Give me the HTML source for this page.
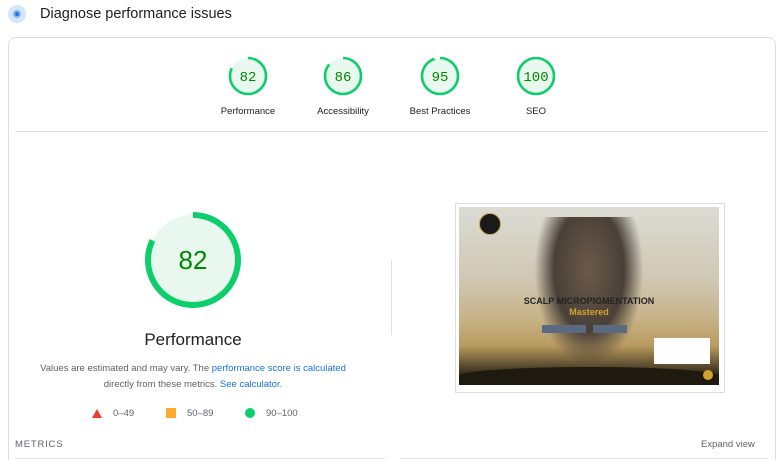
<!DOCTYPE html>
<html style="overflow:hidden;width:782px;height:460px"><head><style>
body{margin:0;width:782px;height:460px;overflow:hidden;background:#fff;font-family:"Liberation Sans",sans-serif;position:relative}
.a{position:absolute}
.gl{position:absolute;font-size:9.5px;color:#212121;width:100px;text-align:center}
</style></head><body>
<div class="a" style="left:8px;top:5px;width:18px;height:18px;border-radius:50%;background:#d6e6fb"></div>
<div class="a" style="left:13px;top:10px;width:8px;height:8px;border-radius:50%;background:#8ab4f8"></div>
<div class="a" style="left:15px;top:12px;width:4px;height:4px;border-radius:50%;background:#1a73e8"></div>
<div class="a" style="left:40px;top:6px;font-size:14.5px;color:#202124">Diagnose performance issues</div>
<div class="a" style="left:8px;top:37px;width:766px;height:430px;border:1px solid #dadce0;border-bottom:none;border-radius:8px 8px 0 0"></div>

<svg class="a" style="left:0;top:0" width="782" height="460">
<circle cx="248" cy="76" r="18" fill="#e9f8ee"/>
<circle cx="343" cy="76" r="18" fill="#e9f8ee"/>
<circle cx="440" cy="76" r="18" fill="#e9f8ee"/>
<circle cx="536" cy="76" r="18" fill="#e9f8ee"/>
<g fill="none" stroke="#0cce6b" stroke-width="2.6">
<circle cx="248" cy="76" r="18" stroke-dasharray="92.7 200" transform="rotate(-90 248 76)"/>
<circle cx="343" cy="76" r="18" stroke-dasharray="97.3 200" transform="rotate(-90 343 76)"/>
<circle cx="440" cy="76" r="18" stroke-dasharray="107.4 200" transform="rotate(-90 440 76)"/>
<circle cx="536" cy="76" r="18"/>
</g>
<g font-family="Liberation Mono,monospace" font-size="14" fill="#008800" text-anchor="middle">
<text x="248" y="81">82</text><text x="343" y="81">86</text><text x="440" y="81">95</text><text x="536" y="81">100</text>
</g>
<line x1="15" y1="131.5" x2="768" y2="131.5" stroke="#e0e0e0"/>
<circle cx="193" cy="260" r="45" fill="#e9f8ee"/>
<circle cx="193" cy="260" r="45" fill="none" stroke="#0cce6b" stroke-width="6" stroke-dasharray="231.9 400" transform="rotate(-90 193 260)"/>
<text x="193" y="269" text-anchor="middle" font-size="26" fill="#008800" font-family="Liberation Sans">82</text>
<line x1="391.5" y1="260" x2="391.5" y2="335" stroke="#e0e0e0"/>
<polygon points="97,409 102,418 92,418" fill="#eb3a2e"/>
<rect x="166" y="408" width="10" height="10" fill="#ffa933"/>
<circle cx="250" cy="413" r="5" fill="#0cce6b"/>
<line x1="15" y1="458.5" x2="385" y2="458.5" stroke="#e0e0e0"/>
<line x1="400" y1="458.5" x2="768" y2="458.5" stroke="#e0e0e0"/>
</svg>
<div class="gl" style="left:198px;top:106px">Performance</div>
<div class="gl" style="left:293px;top:106px">Accessibility</div>
<div class="gl" style="left:390px;top:106px">Best Practices</div>
<div class="gl" style="left:486px;top:106px">SEO</div>

<div class="a" style="left:93px;top:330px;width:200px;text-align:center;font-size:17px;color:#212121">Performance</div>
<div class="a" style="left:20px;top:361px;width:346px;text-align:center;font-size:9.5px;line-height:16px;color:#5f6368">Values are estimated and may vary. The <span style="color:#1a73e8">performance score is calculated</span><br>directly from these metrics. <span style="color:#1a73e8">See calculator.</span></div>
<div class="a" style="left:113px;top:408px;font-size:9.5px;color:#5f6368">0–49</div>
<div class="a" style="left:187px;top:408px;font-size:9.5px;color:#5f6368">50–89</div>
<div class="a" style="left:266px;top:408px;font-size:9.5px;color:#5f6368">90–100</div>
<div class="a" style="left:15px;top:439px;font-size:9.5px;letter-spacing:.8px;color:#5f6368">METRICS</div>
<div class="a" style="left:701px;top:439px;font-size:9.5px;color:#5f6368">Expand view</div>

<div class="a" style="left:455px;top:203px;width:268px;height:188px;border:1px solid #ddd;background:#fff"></div>
<div class="a" style="left:459px;top:207px;width:260px;height:178px;overflow:hidden;background:linear-gradient(180deg,#dcdcd4 0%,#cfc8b4 40%,#c7b48a 62%,#b99a5e 78%,#2a2416 95%)">
<div class="a" style="left:75px;top:10px;width:110px;height:150px;background:radial-gradient(ellipse at 50% 35%,#6b5a4a 0%,#4a4038 45%,rgba(70,60,50,0) 70%)"></div>
<div class="a" style="left:20px;top:6px;width:20px;height:20px;border-radius:50%;background:#1a1a1a;border:1px solid #c9a14a"></div>
<div class="a" style="left:0;top:89px;width:260px;text-align:center;font-size:9px;font-weight:bold;color:#222">SCALP MICROPIGMENTATION</div>
<div class="a" style="left:0;top:100px;width:260px;text-align:center;font-size:9px;font-weight:bold;color:#d4a22c">Mastered</div>
<div class="a" style="left:83px;top:118px;width:44px;height:8px;background:#5a6a80"></div>
<div class="a" style="left:134px;top:118px;width:34px;height:8px;background:#5a6a80"></div>
<div class="a" style="left:0;top:160px;width:260px;height:30px;background:#1e1a10;border-radius:50% 50% 0 0/30% 30% 0 0"></div>
<div class="a" style="left:195px;top:131px;width:56px;height:26px;background:#fff"></div>
<div class="a" style="left:244px;top:163px;width:10px;height:10px;border-radius:50%;background:#d4a22c"></div>
</div>
</body></html>
